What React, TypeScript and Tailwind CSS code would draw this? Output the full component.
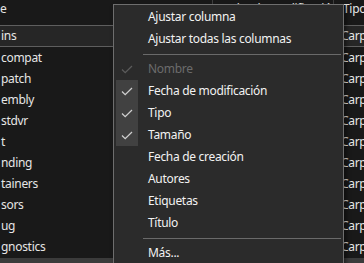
import React from "react";

const rows = [
  { name: "ins", sel: true },
  { name: "compat" },
  { name: "patch" },
  { name: "embly" },
  { name: "stdvr" },
  { name: "t" },
  { name: "nding" },
  { name: "tainers" },
  { name: "sors" },
  { name: "ug" },
  { name: "gnostics" },
];

const Check = ({ color }: { color: string }) => (
  <svg width="12" height="9" viewBox="0 0 12 9" fill="none">
    <path d="M1 4.5 L4.2 7.6 L11 1" stroke={color} strokeWidth="1.3" />
  </svg>
);

type Item = { label: string; checked?: boolean; disabled?: boolean };

const MenuItem = ({ label, checked, disabled }: Item) => (
  <div className="flex h-[22px] items-center">
    <div
      className={
        "ml-[2px] flex h-[22px] w-[22px] shrink-0 items-center justify-center " +
        (checked && !disabled ? "bg-[#414141]" : "")
      }
    >
      {checked && <Check color={disabled ? "#5c5c5c" : "#cfcfcf"} />}
    </div>
    <span
      className={
        "ml-[10px] whitespace-nowrap " +
        (disabled ? "text-[#6b6b6b]" : "text-[#f2f2f2]")
      }
    >
      {label}
    </span>
  </div>
);

const Sep = () => (
  <div className="flex h-[8px] items-center">
    <div className="ml-[29px] mr-[2px] h-px flex-1 bg-[#6a6a6a]" />
  </div>
);

export default function App() {
  return (
    <div
      className="relative h-[263px] w-[364px] overflow-hidden bg-[#191919] text-[12px] tracking-[-0.3px] text-[#e6e6e6]"
      style={{ fontFamily: '"Noto Sans", "Open Sans", sans-serif' }}
    >
      {/* list */}
      <div className="flex h-[258px] flex-col">
        <div className="flex h-[26px] shrink-0 border-b border-[#5e5e5e] leading-[16px]">
          <div className="w-[212px] shrink-0 pt-[1px]">e</div>
          <div className="w-[121px] shrink-0 overflow-hidden whitespace-nowrap border-l border-[#3f3f3f] pl-[6px] pt-[1px]">
            Fecha de modificación
          </div>
          <div className="shrink-0 whitespace-nowrap border-l border-[#3f3f3f] pl-[9px] pt-[1px]">
            Tipo
          </div>
        </div>
        {rows.map((r, i) => (
          <div
            key={i}
            className={
              "flex h-[21px] shrink-0 items-center leading-[16px] " +
              (r.sel ? "border-b border-[#5e5e5e] bg-[#262626]" : "")
            }
          >
            <div className="w-[212px] shrink-0 pl-px">{r.name}</div>
            <div className="w-[121px] shrink-0" />
            <div className="shrink-0 whitespace-nowrap pl-[8px]">Carpeta</div>
          </div>
        ))}
        <div className="flex-1" />
      </div>
      <div className="h-[5px] bg-[#3b3b3b]" />

      {/* context menu */}
      <div className="absolute left-[113px] top-[4px] h-[270px] w-[231px] border border-[#6e6e6e] bg-[#2b2b2b] pt-[1px] shadow-[2px_2px_4px_rgba(0,0,0,0.5)]">
        <MenuItem label="Ajustar columna" />
        <MenuItem label="Ajustar todas las columnas" />
        <Sep />
        <MenuItem label="Nombre" checked disabled />
        <MenuItem label="Fecha de modificación" checked />
        <MenuItem label="Tipo" checked />
        <MenuItem label="Tamaño" checked />
        <MenuItem label="Fecha de creación" />
        <MenuItem label="Autores" />
        <MenuItem label="Etiquetas" />
        <MenuItem label="Título" />
        <Sep />
        <MenuItem label="Más..." />
      </div>
    </div>
  );
}
